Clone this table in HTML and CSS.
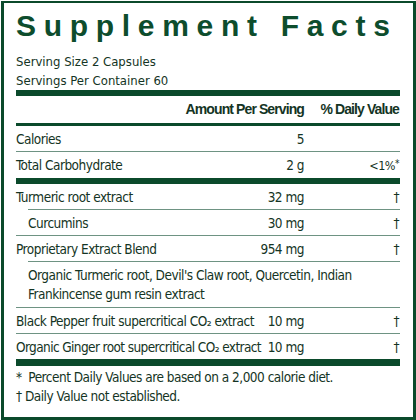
FILE: index.html
```html
<!DOCTYPE html>
<html>
<head>
<meta charset="utf-8">
<link rel="stylesheet" href="styles.css">
</head>
<body>
<div class="label">
  <h1 class="title">Supplement Facts</h1>
  <div class="serving">
    <div>Serving Size 2 Capsules</div>
    <div>Servings Per Container 60</div>
  </div>
  <div class="bar"></div>
  <div class="row head">
    <span class="name"></span>
    <span class="amt">Amount Per Serving</span>
    <span class="dv">% Daily Value</span>
  </div>
  <div class="rule"></div>
  <div class="row">
    <span class="name">Calories</span>
    <span class="amt">5</span>
    <span class="dv"></span>
  </div>
  <div class="thin"></div>
  <div class="row">
    <span class="name">Total Carbohydrate</span>
    <span class="amt">2 g</span>
    <span class="dv small">&lt;1%<span class="sup">*</span></span>
  </div>
  <div class="bar"></div>
  <div class="row">
    <span class="name">Turmeric root extract</span>
    <span class="amt">32 mg</span>
    <span class="dv">†</span>
  </div>
  <div class="thin ind"></div>
  <div class="row">
    <span class="name ind">Curcumins</span>
    <span class="amt">30 mg</span>
    <span class="dv">†</span>
  </div>
  <div class="thin"></div>
  <div class="row">
    <span class="name">Proprietary Extract Blend</span>
    <span class="amt">954 mg</span>
    <span class="dv">†</span>
  </div>
  <div class="thin ind"></div>
  <div class="desc">Organic Turmeric root, Devil's Claw root, Quercetin, Indian<br>Frankincense gum resin extract</div>
  <div class="thin"></div>
  <div class="row">
    <span class="name">Black Pepper fruit supercritical CO₂ extract</span>
    <span class="amt">10 mg</span>
    <span class="dv">†</span>
  </div>
  <div class="thin"></div>
  <div class="row">
    <span class="name tight">Organic Ginger root supercritical CO₂ extract</span>
    <span class="amt">10 mg</span>
    <span class="dv">†</span>
  </div>
  <div class="bar end"></div>
  <div class="notes">
    <div>*&nbsp; Percent Daily Values are based on a 2,000 calorie diet.</div>
    <div>† Daily Value not established.</div>
  </div>
</div>
</body>
</html>
```

FILE: styles.css
```css
html, body {
  margin: 0;
  padding: 0;
  background: #ffffff;
}

.label {
  box-sizing: border-box;
  width: 415px;
  height: 419px;
  margin: 1px 0 0 1px;
  border: 3px solid #0b4a2b;
  border-top-width: 2px;
  padding: 0 13px 0 12px;
  font-family: "DejaVu Sans Condensed", "Liberation Sans", sans-serif;
  font-size: 13.5px;
  line-height: 19px;
  letter-spacing: -0.5px;
  color: #143424;
}

.title {
  margin: 0;
  padding-top: 6px;
  font-family: "Liberation Sans", Arial, sans-serif;
  font-weight: bold;
  font-size: 30px;
  line-height: 34px;
  letter-spacing: 7.7px;
  color: #0d4d2d;
  white-space: nowrap;
}

.serving {
  margin-top: 9px;
  font-size: 13px;
  letter-spacing: 0;
}

.bar {
  height: 6px;
  background: #0b4a2b;
}

.bar.end {
  height: 7px;
}

.rule {
  height: 3px;
  background: #0b4a2b;
}

.thin {
  height: 1px;
  background: #6e9383;
}

.thin.ind {
  margin-left: 12px;
}

.row {
  display: flex;
  padding: 4px 0 2px;
  white-space: nowrap;
}

.row.head {
  padding: 4px 0 4px;
  font-family: "Liberation Sans", Arial, sans-serif;
  font-size: 14px;
  font-weight: bold;
  letter-spacing: -0.9px;
}

.name {
  flex: 1;
  min-width: 0;
}

.name.tight {
  letter-spacing: -0.6px;
}

.name.ind {
  padding-left: 12px;
}

.amt {
  flex-shrink: 0;
  text-align: right;
  padding-left: 4px;
}

.dv {
  flex-shrink: 0;
  width: 95px;
  text-align: right;
  padding-right: 1px;
}

.small {
  font-size: 12.5px;
}

.sup {
  position: relative;
  top: -3px;
  font-size: 10px;
}

.desc {
  padding: 4px 0 3px 12px;
}

.notes {
  margin-top: 2px;
}
```
